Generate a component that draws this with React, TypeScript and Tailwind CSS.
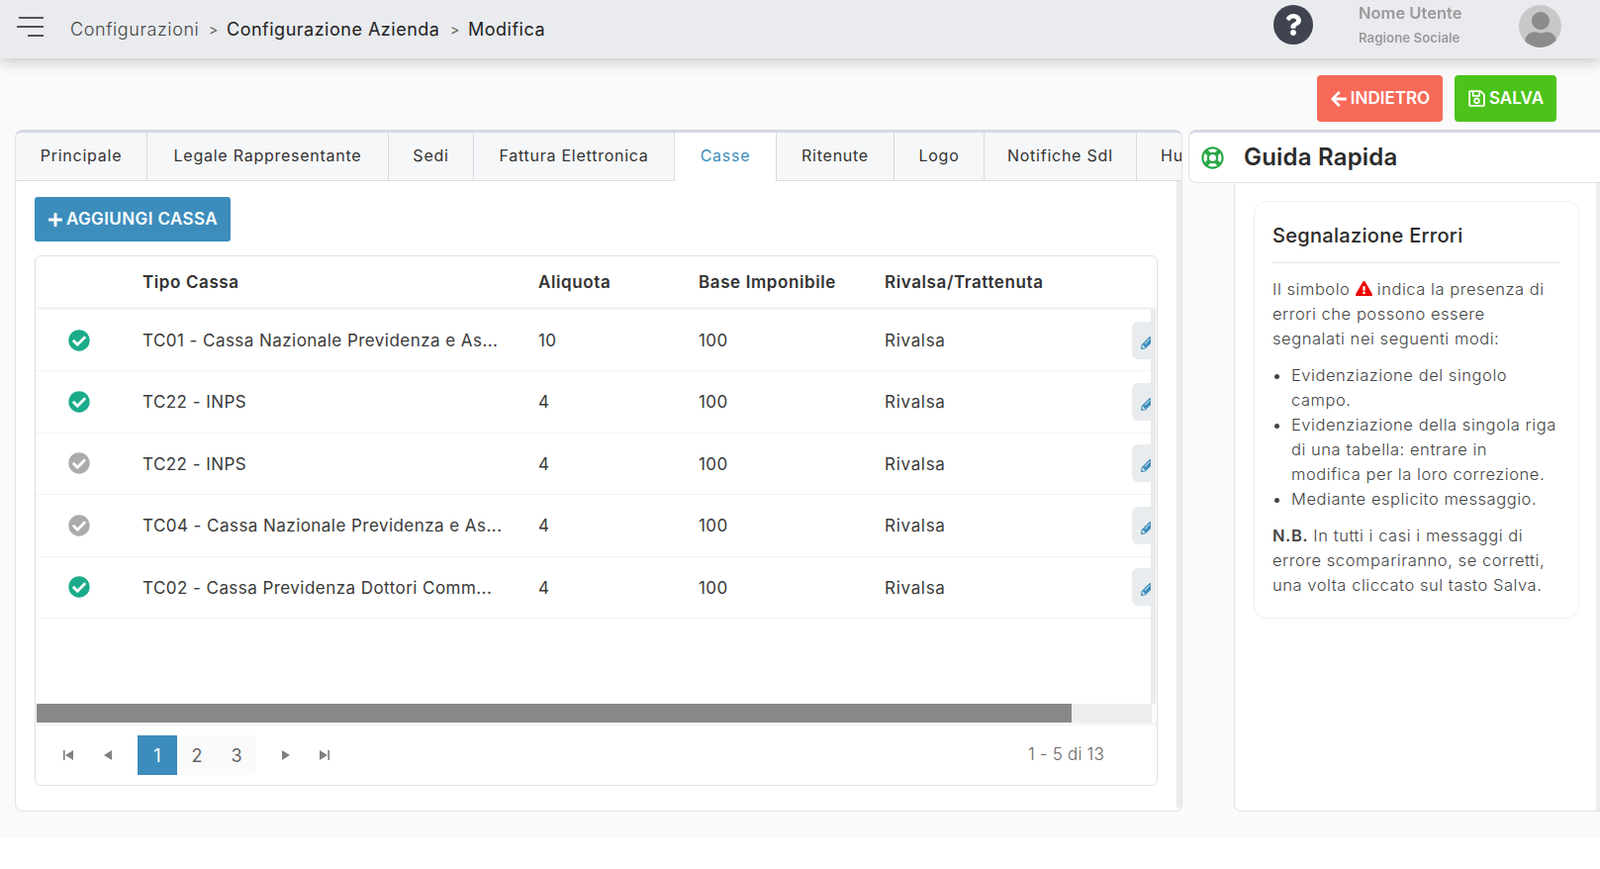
import React from "react";
import { FaArrowLeft, FaCheckCircle, FaExclamationTriangle, FaPencilAlt, FaPlus, FaQuestion, FaRegLifeRing, FaRegSave, FaUser } from "react-icons/fa";

const tabs: [string, number][] = [
  ["Principale", 133],
  ["Legale Rappresentante", 244],
  ["Sedi", 86],
  ["Fattura Elettronica", 203],
  ["Casse", 103],
  ["Ritenute", 119],
  ["Logo", 91],
  ["Notifiche SdI", 154],
  ["Hub", 80],
];

const rows: [string, string, boolean][] = [
  ["TC01 - Cassa Nazionale Previdenza e As...", "10", true],
  ["TC22 - INPS", "4", true],
  ["TC22 - INPS", "4", false],
  ["TC04 - Cassa Nazionale Previdenza e As...", "4", false],
  ["TC02 - Cassa Previdenza Dottori Comm...", "4", true],
];

function Pager({ kind }: { kind: "first" | "prev" | "next" | "last" }) {
  return (
    <svg width="12" height="12" viewBox="0 0 12 12" fill="#808080">
      {kind === "first" && <path d="M1 1h1.600v10H1zM11 1v10L3 6z" />}
      {kind === "prev" && <path d="M10 1v10L2 6z" />}
      {kind === "next" && <path d="M2 1v10l8-5z" />}
      {kind === "last" && <path d="M1 1v10l8-5zM9.400 1H11v10H9.400z" />}
    </svg>
  );
}

export default function App() {
  return (
    <div className="h-[878px] w-[1617px] overflow-hidden bg-white [font-family:Inter,sans-serif] text-[#333]">
      <div className="h-[846px] bg-[#fafafa]">
        <header className="relative z-10 flex h-[59px] items-center bg-[#e9ebef] shadow-[0_3px_14px_rgba(0,0,0,0.22)]">
          <svg className="ml-[17px] -translate-y-[3px]" width="28" height="22" viewBox="0 0 28 22" stroke="#222" strokeWidth="1.300">
            <path d="M2 2h25M0 11h27M11 20h16" />
          </svg>
          <nav className="ml-[26px] flex items-center text-[18px]">
            <span className="w-[140px] font-light tracking-[0.6px] text-[#444]">Configurazioni</span>
            <span className="w-[18px] text-[14px] text-[#666]">&gt;</span>
            <span className="w-[226px] whitespace-nowrap tracking-[0.5px] text-[#222]">Configurazione Azienda</span>
            <span className="w-[18px] text-[14px] text-[#666]">&gt;</span>
            <span className="tracking-[0.5px] text-[#222]">Modifica</span>
          </nav>
          <div className="ml-auto flex h-[40px] w-[40px] -translate-y-[5px] items-center justify-center rounded-full bg-[#3f4450] text-white">
            <FaQuestion size={22} />
          </div>
          <div className="ml-[46px] flex w-[162px] -translate-y-[5px] flex-col [font-family:'Open_Sans',sans-serif] font-semibold text-[#9a9a9a] blur-[0.4px]">
            <span className="text-[16.500px] leading-[26px]">Nome Utente</span>
            <span className="text-[13.300px] leading-[24px]">Ragione Sociale</span>
          </div>
          <div className="mr-[39px] flex h-[43px] w-[43px] -translate-y-[3px] items-end justify-center overflow-hidden rounded-full bg-[#c8c8c8] text-[#8c8c8c]">
            <FaUser size={36} />
          </div>
        </header>

        <div className="flex h-[72px] items-start justify-end gap-[12px] pr-[44px] pt-[17px]">
          <button className="flex h-[47px] w-[127px] items-center justify-center gap-[3px] rounded-[4px] bg-[#f76a58] text-[17px] font-semibold text-white">
            <FaArrowLeft size={18} /> INDIETRO
          </button>
          <button className="flex h-[47px] w-[103px] items-center justify-center gap-[3px] rounded-[4px] bg-[#4cc31a] text-[17px] font-semibold text-white">
            <FaRegSave size={19} /> SALVA
          </button>
        </div>

        <div className="flex h-[689px] pl-[15px]">
          <section className="relative h-full w-[1180px] overflow-hidden rounded-[8px] border-x border-b border-t-[3px] border-[#e3e3e3] border-t-[#d5d8e3] bg-white">
            <div className="flex h-[49px] border-b border-[#d8dbe0] bg-[#f6f7f8]">
              {tabs.map(([t, w], i) => (
                <div
                  key={t}
                  style={{ width: w }}
                  className={
                    t === "Casse"
                      ? "relative z-[1] -mt-[3px] box-border flex h-[52px] shrink-0 items-center justify-center border-t-[3px] border-r border-[#d8dbe0] border-t-[#3c8dbc] bg-white pb-[3px] text-[16px] tracking-[0.75px] text-[#3c8dbc]"
                      : i === 8
                        ? "flex shrink-0 items-center pb-[2px] pl-[24px] text-[16px] tracking-[0.75px] text-[#333]"
                        : "flex shrink-0 items-center justify-center whitespace-nowrap border-r border-[#d8dbe0] pb-[2px] text-[16px] tracking-[0.75px] text-[#333]"
                  }
                >
                  {t}
                </div>
              ))}
            </div>
            <div className="absolute right-0 top-[49px] bottom-[3px] w-[5px] bg-[#ebebeb]" />
            <div className="pl-[19px] pt-[16px]">
              <button className="flex h-[45px] w-[198px] items-center justify-center gap-[3px] rounded-[3px] bg-[#3c8dbc] pt-[1px] text-[17px] font-semibold tracking-[0.4px] text-white">
                <FaPlus size={16} /> AGGIUNGI CASSA
              </button>
              <div className="mt-[14px] h-[536px] w-[1135px] overflow-hidden rounded-[6px] border border-[#e0e0e0]">
                <div className="grid h-[51px] grid-cols-[108px_400px_162px_188px_1fr] items-center whitespace-nowrap pt-[2px] text-[17px] font-semibold tracking-[0.6px] text-[#333]">
                  <span />
                  <span>Tipo Cassa</span>
                  <span>Aliquota</span>
                  <span>Base Imponibile</span>
                  <span>Rivalsa/Trattenuta</span>
                </div>
                <div className="ml-[1px] h-[3px] w-[1131px] bg-[#f3f3f3]" />
                <div className="flex h-[398px]">
                  <div className="h-full w-[1127px] overflow-hidden">
                    {rows.map(([name, al, ok], i) => (
                      <div key={i} className="grid h-[62.400px] grid-cols-[108px_400px_162px_188px_250px_40px] items-center border-b border-[#f3f3f3] text-[17px] tracking-[0.45px] text-[#3a3a3a]">
                        <span className="flex justify-center pr-[21px]">
                          <FaCheckCircle size={22} className={ok ? "text-[#1bab8a]" : "text-[#ababab]"} />
                        </span>
                        <span className="translate-y-[1px] whitespace-nowrap">{name}</span>
                        <span className="translate-y-[1px]">{al}</span>
                        <span className="translate-y-[1px]">100</span>
                        <span className="translate-y-[1px] tracking-[0.7px]">Rivalsa</span>
                        <span className="flex h-[38px] w-[40px] items-center rounded-[6px] bg-[#e9ecef] pl-[9px] pt-[2px] text-[#3c8dbc]">
                          <FaPencilAlt size={16} />
                        </span>
                      </div>
                    ))}
                  </div>
                  <div className="h-full w-[5px] bg-[#ebebeb]" />
                </div>
                <div className="ml-[1px] h-[19px] w-[1127px] bg-[#eeeeee]">
                  <div className="h-full w-[1046px] bg-[#888888]" />
                </div>
                <div className="ml-[1px] h-[3px] w-[1132px] bg-[#f5f5f5]" />
                <div className="flex h-[60px] items-center text-[18px]">
                  <span className="ml-[27px] flex w-[40px]"><Pager kind="first" /></span>
                  <span className="flex w-[36px]"><Pager kind="prev" /></span>
                  <span className="flex h-[40px] w-[40px] items-center justify-center bg-[#3c8dbc] text-white">1</span>
                  <span className="flex h-[40px] w-[40px] items-center justify-center bg-[#fafafa] text-[#666]">2</span>
                  <span className="flex h-[40px] w-[40px] items-center justify-center bg-[#fafafa] text-[#666]">3</span>
                  <span className="ml-[24px] flex w-[39px]"><Pager kind="next" /></span>
                  <span className="flex w-[30px]"><Pager kind="last" /></span>
                  <span className="ml-auto mr-[53px] text-[17px] font-light tracking-[0.2px] text-[#666]">1 - 5 di 13</span>
                </div>
              </div>
            </div>
          </section>

          <aside className="ml-[6px] flex h-full flex-1 flex-col">
            <div className="relative z-[1] flex h-[54px] items-center rounded-tl-[8px] rounded-bl-[8px] border-l border-b border-t-[3px] border-[#e3e3e3] border-t-[#d5d8e3] bg-white pl-[12px]">
              <FaRegLifeRing size={23} className="text-[#28a745]" />
              <h2 className="ml-[20px] text-[24px] font-semibold tracking-[0.2px] text-[#2b2b2b]">Guida Rapida</h2>
            </div>
            <div className="relative ml-[46px] -mt-[2px] flex-1 rounded-bl-[8px] border-l border-b border-[#e3e3e3] bg-white pl-[19px] pt-[20px]">
              <div className="absolute right-0 top-0 bottom-0 w-[4px] bg-[#eeeeee]" />
              <div className="h-[422px] w-[329px] rounded-[12px] border border-[#efefef] pl-[18px] pr-[19px] pt-[20px] text-[16.500px] font-light leading-[25px] tracking-[0.55px] text-[#444]">
                <h3 className="border-b border-[#e3e3e3] pb-[13px] text-[20px] font-medium leading-[28px] tracking-[0.3px] text-[#2b2b2b]">Segnalazione Errori</h3>
                <p className="mt-[14px] whitespace-nowrap">
                  Il simbolo <FaExclamationTriangle size={17} className="inline align-[-2px] text-[#ee0000]" /> indica la presenza di
                  <br />errori che possono essere
                  <br />segnalati nei seguenti modi:
                </p>
                <ul className="mt-[12px] list-disc whitespace-nowrap pl-[19px]">
                  <li>Evidenziazione del singolo<br />campo.</li>
                  <li>Evidenziazione della singola riga<br />di una tabella: entrare in<br />modifica per la loro correzione.</li>
                  <li>Mediante esplicito messaggio.</li>
                </ul>
                <p className="mt-[12px] whitespace-nowrap">
                  <b className="font-semibold">N.B.</b> In tutti i casi i messaggi di
                  <br />errore scompariranno, se corretti,
                  <br />una volta cliccato sul tasto Salva.
                </p>
              </div>
            </div>
          </aside>
        </div>
      </div>
    </div>
  );
}
